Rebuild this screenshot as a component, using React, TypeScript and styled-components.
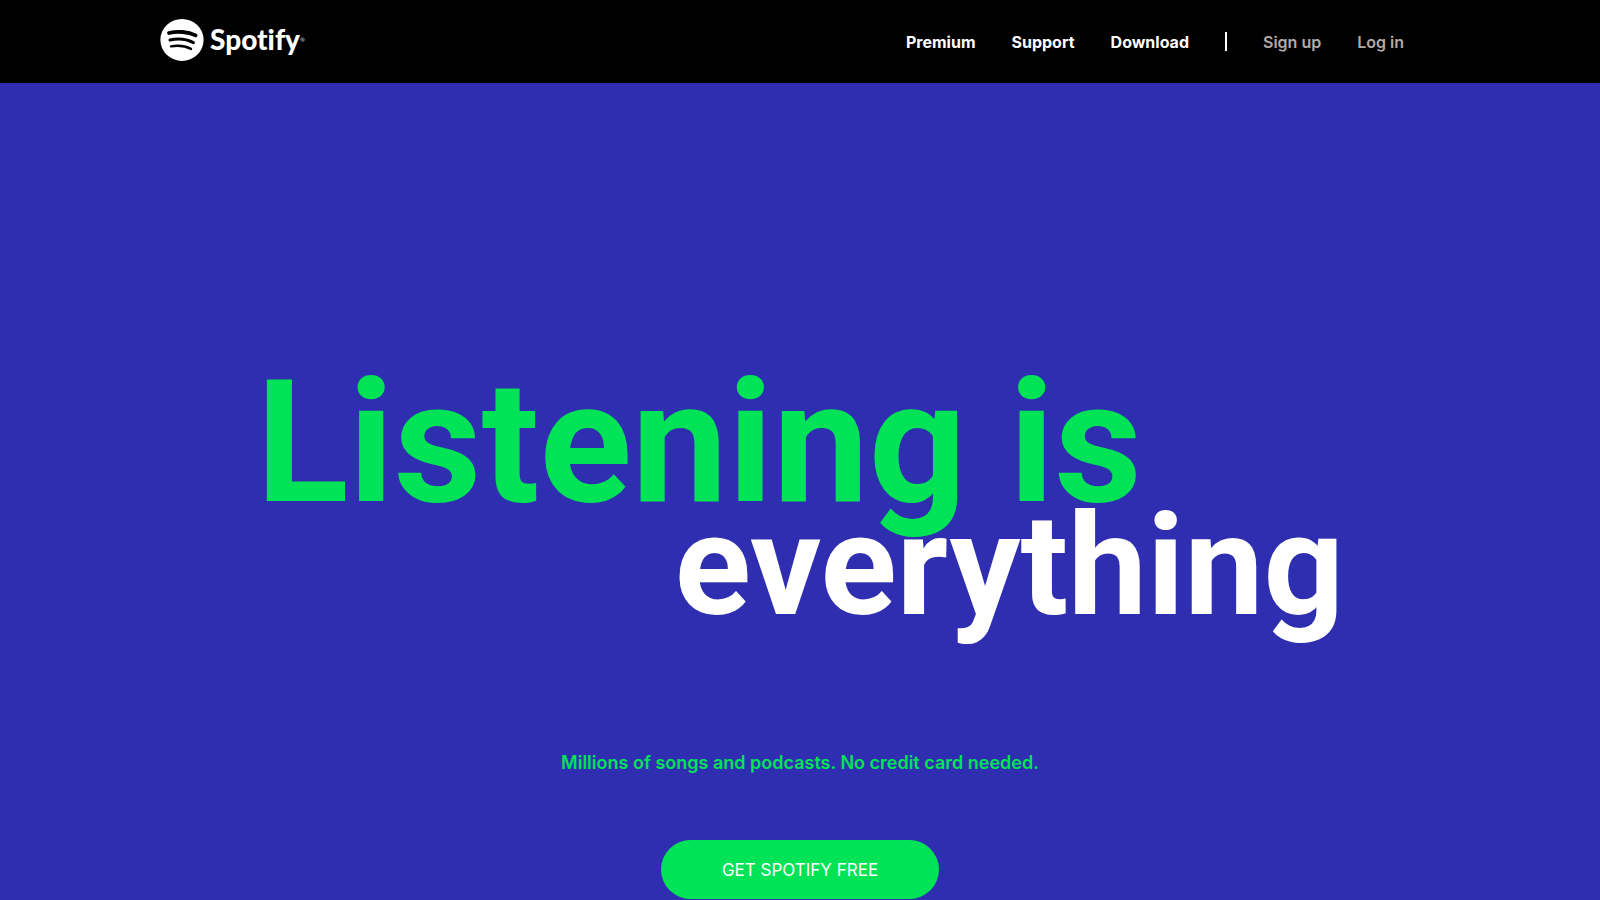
import React from "react";
import styled, { createGlobalStyle } from "styled-components";

const GlobalStyle = createGlobalStyle`
  *, *::before, *::after { box-sizing: border-box; }
  html, body { margin: 0; padding: 0; }
  body {
    background: #2f2eb0;
    font-family: Inter, "Liberation Sans", sans-serif;
    overflow-x: hidden;
  }
`;

const Header = styled.header`
  display: flex;
  align-items: center;
  justify-content: space-between;
  padding: 18px 12% 22px 10%;
  background: #000;
`;

const Brand = styled.a`
  display: flex;
  align-items: center;
  gap: 6px;
  color: #fff;
  text-decoration: none;
`;

const Mark = styled.svg`
  display: block;
  width: 44px;
  height: 43px;
`;

const Wordmark = styled.span`
  font-family: Lato, sans-serif;
  font-size: 28px;
  font-weight: 900;
  font-variant-ligatures: none;
  line-height: 43px;
`;

const Registered = styled.sup`
  color: #999;
  font-size: 6px;
  line-height: 6px;
  vertical-align: 8px;
`;

const Nav = styled.nav`
  display: flex;
  align-items: center;
  gap: 36px;
  padding: 4px 4px 0 0;
`;

const NavLink = styled.a<{ $muted?: boolean }>`
  color: ${(p) => (p.$muted ? "#b3a9a6" : "#fff")};
  font-size: 16px;
  font-weight: ${(p) => (p.$muted ? 600 : 700)};
  line-height: 20px;
  text-decoration: none;
`;

const Divider = styled.span`
  width: 2px;
  height: 19px;
  background: #fff;
`;

const Hero = styled.main`
  display: flex;
  flex-direction: column;
  align-items: center;
  padding-top: 294px;
  background: #2f2eb0;
`;

const Title = styled.h1`
  display: flex;
  flex-direction: column;
  align-self: stretch;
  margin: 0;
  padding: 0 16%;
  font-family: Roboto, Inter, sans-serif;
  font-weight: 700;
  white-space: nowrap;
`;

const TitleTop = styled.span`
  color: #00e356;
  font-size: 171px;
  line-height: 132px;
`;

const TitleBottom = styled.span`
  align-self: flex-end;
  color: #fff;
  font-size: 141px;
  line-height: 113px;
`;

const Lead = styled.p`
  margin: 129px 0 0;
  color: #00e356;
  font-size: 18px;
  font-weight: 600;
  line-height: 24px;
`;

const Cta = styled.button`
  margin-top: 65px;
  padding: 1px 61px 0;
  border: 0;
  border-radius: 30px;
  background: #00e356;
  color: #fff;
  font-family: inherit;
  font-size: 17px;
  font-weight: 400;
  line-height: 58px;
  cursor: pointer;
`;

export default function App() {
  return (
    <>
      <GlobalStyle />
      <Header>
        <Brand href="#">
          <Mark viewBox="0 0 44 43" aria-hidden="true">
            <ellipse cx="22" cy="21.9" rx="21.6" ry="21" fill="#fff" />
            <g fill="none" stroke="#000" strokeLinecap="round">
              <path d="M9 15C17 13 28 13.5 35.6 17.4" strokeWidth="3.8" />
              <path d="M10 22C17 20.4 26.5 21.1 33.4 24.6" strokeWidth="3.1" />
              <path d="M11 28.4C17.5 27.2 25 27.8 31 30.9" strokeWidth="2.4" />
            </g>
          </Mark>
          <Wordmark>
            Spotify<Registered>®</Registered>
          </Wordmark>
        </Brand>
        <Nav aria-label="Main">
          <NavLink href="#">Premium</NavLink>
          <NavLink href="#">Support</NavLink>
          <NavLink href="#">Download</NavLink>
          <Divider />
          <NavLink href="#" $muted>Sign up</NavLink>
          <NavLink href="#" $muted>Log in</NavLink>
        </Nav>
      </Header>
      <Hero>
        <Title>
          <TitleTop>Listening is</TitleTop>
          <TitleBottom>everything</TitleBottom>
        </Title>
        <Lead>Millions of songs and podcasts. No credit card needed.</Lead>
        <Cta type="button">GET SPOTIFY FREE</Cta>
      </Hero>
    </>
  );
}
